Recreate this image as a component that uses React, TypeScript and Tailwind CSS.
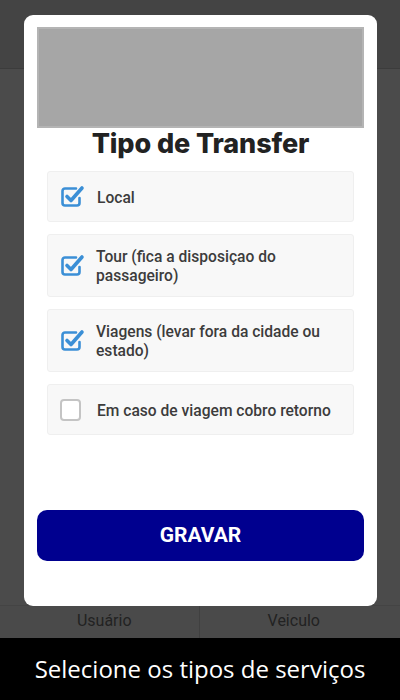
import React from "react";

function CheckIcon({ checked }: { checked: boolean }) {
  if (!checked) {
    return (
      <div className="w-[21px] h-[22px] rounded-[4px] border-2 border-[#c4c4c4] bg-white shrink-0" />
    );
  }
  return (
    <svg width="26" height="26" viewBox="0 0 26 26" className="shrink-0 -mt-[2px] -ml-[1px]">
      <path
        d="M17 5.5 H6 a2.5 2.5 0 0 0 -2.5 2.5 V20 a2.5 2.5 0 0 0 2.5 2.5 H18 a2.5 2.5 0 0 0 2.5 -2.5 V15"
        fill="none"
        stroke="#3b8fd6"
        strokeWidth="2.6"
        strokeLinecap="round"
      />
      <path
        d="M8 13.5 L12 17.5 L23 5"
        fill="none"
        stroke="#3b8fd6"
        strokeWidth="3.6"
        strokeLinecap="round"
        strokeLinejoin="round"
      />
    </svg>
  );
}

const items = [
  { label: "Local", checked: true, h: "h-[51px]" },
  { label: "Tour (fica a disposiçao do passageiro)", checked: true, h: "h-[63px]" },
  { label: "Viagens (levar fora da cidade ou estado)", checked: true, h: "h-[63px]" },
  { label: "Em caso de viagem cobro retorno", checked: false, h: "h-[51px]" },
];

export default function App() {
  return (
    <div className="relative w-[400px] h-[700px] flex flex-col overflow-hidden" style={{ fontFamily: "Roboto, sans-serif" }}>
      <div className="h-[69px] bg-[#444444] border-b border-[#3c3c3c]" />
      <div className="flex-1 bg-[#4b4b4b]" />
      <div className="h-[33px] flex bg-[#4a4a4a] border-t border-[#444]">
        <div className="flex-1 flex items-center justify-center text-[16px] text-[#222] pb-[3px] pl-[10px]">Usuário</div>
        <div className="w-px bg-[#404040]" />
        <div className="flex-1 flex items-center justify-center text-[16px] text-[#222] pb-[3px] pr-[12px]">Veiculo</div>
      </div>
      <div className="h-[62px] bg-black flex items-center justify-center text-white text-[24px]" style={{ fontFamily: "'Open Sans', sans-serif" }}>
        Selecione os tipos de serviços
      </div>

      <div className="absolute left-[24px] top-[15px] w-[353px] h-[591px] bg-white rounded-[9px] flex flex-col px-[13px] pt-[12px]">
        <div className="h-[101px] bg-[#a6a6a6] border-2 border-[#b4b4b4]" />
        <div className="leading-[32px] mb-[11px] text-center text-[27px] font-extrabold text-[#222] tracking-[-0.1px]" style={{ fontFamily: "Inter, sans-serif" }}>
          Tipo de Transfer
        </div>
        <div className="flex flex-col gap-[12px] px-[10px]">
          {items.map((it) => (
            <div
              key={it.label}
              className={`${it.h} bg-[#f8f8f8] border border-[#efefef] rounded-[3px] flex items-center pl-[12px] pr-[12px]`}
            >
              <div className="w-[26px] flex justify-start">
                <CheckIcon checked={it.checked} />
              </div>
              <div className="ml-[11px] pt-[3px] text-[15.6px] font-medium text-[#3c3c3c] leading-[19px]">{it.label}</div>
            </div>
          ))}
        </div>
        <div className="mt-[75px] h-[51px] bg-[#00008f] rounded-[10px] flex items-center justify-center text-white text-[21px] font-bold">
          GRAVAR
        </div>
      </div>
    </div>
  );
}
